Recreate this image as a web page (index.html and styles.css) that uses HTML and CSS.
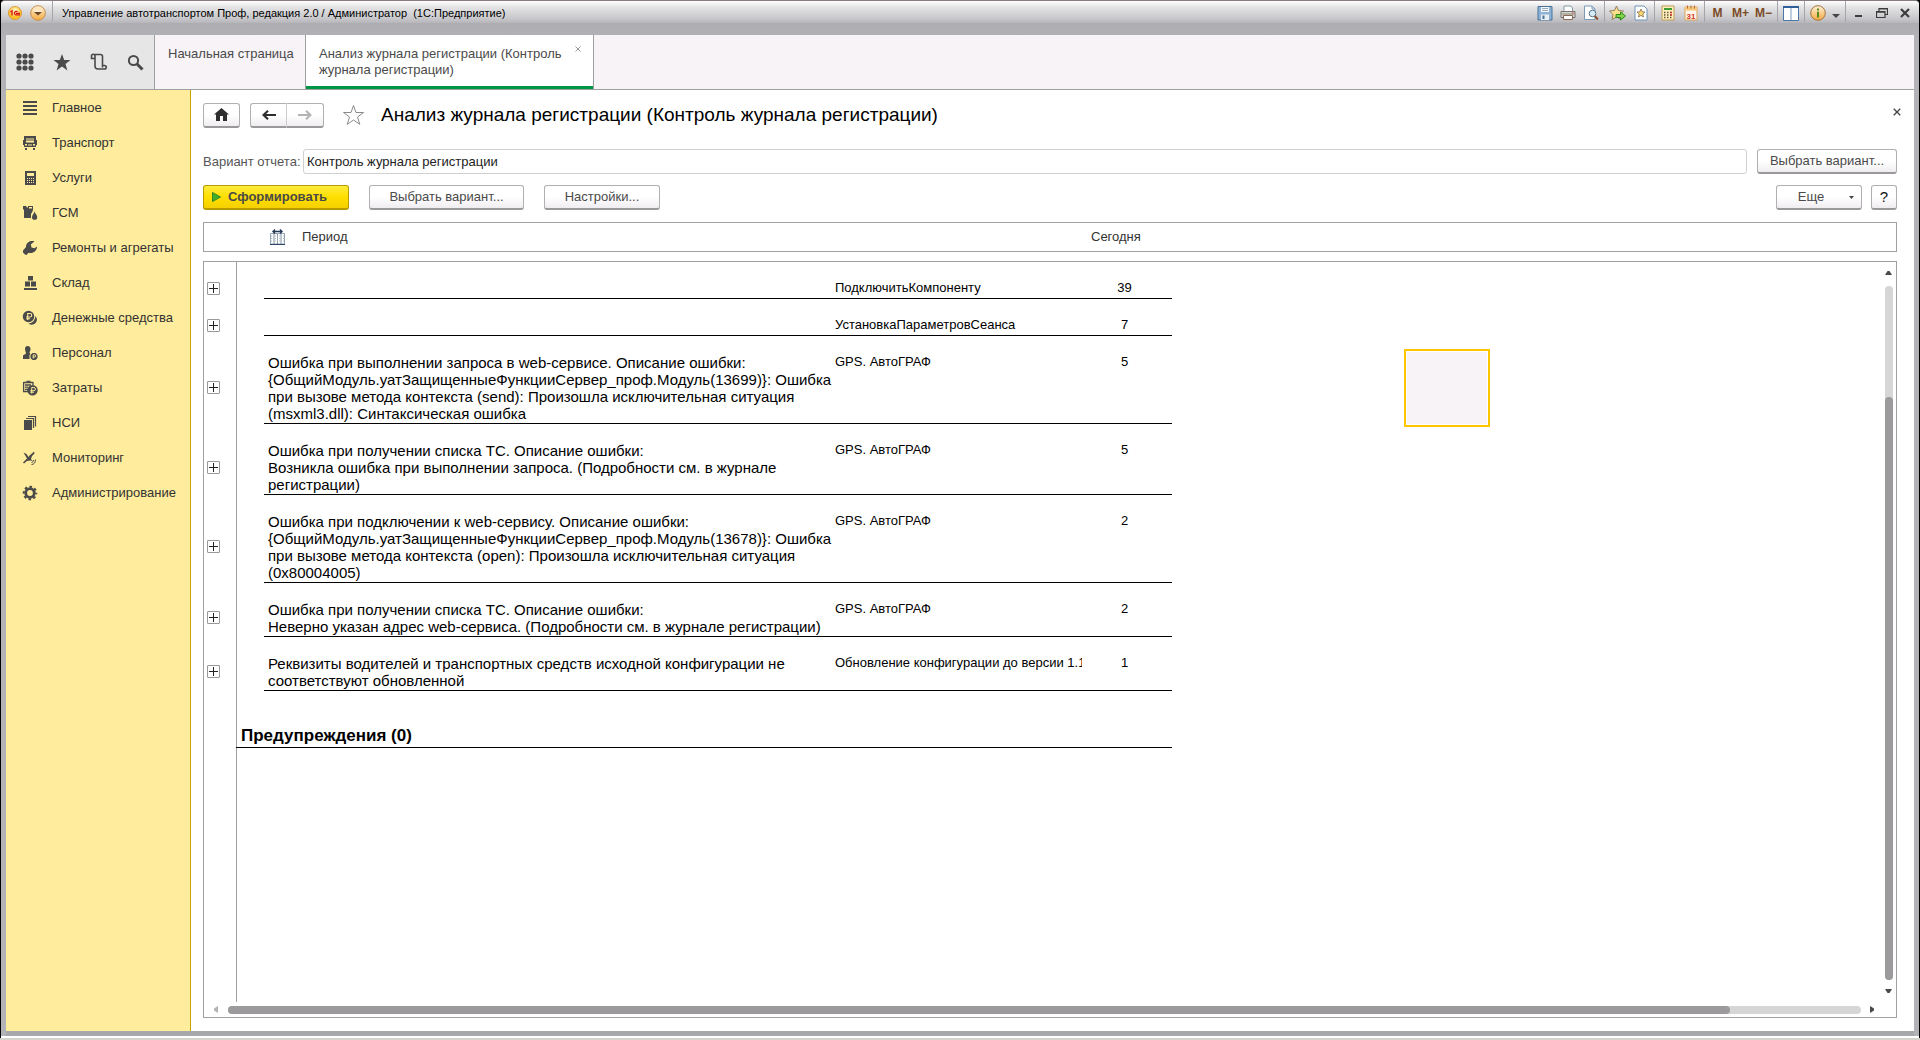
FILE: index.html
```html
<!DOCTYPE html>
<html lang="ru">
<head>
<meta charset="utf-8">
<title>Управление автотранспортом Проф, редакция 2.0 / Администратор (1С:Предприятие)</title>
<link rel="stylesheet" href="styles.css">
</head>
<body>
<div class="window">
  <header class="titlebar">
    <button class="tb-btn" aria-label="1С">
      <svg width="14" height="14" viewBox="0 0 14 14"><defs><radialGradient id="g1" cy=".3"><stop offset="0" stop-color="#fffbd0"/><stop offset="1" stop-color="#fbc12a"/></radialGradient></defs><circle cx="7" cy="7" r="6.5" fill="url(#g1)" stroke="#d98a1c" stroke-width=".8"/><path d="M2.500 6 4 4.800V9.500M9.500 5.800A1.800 1.800 0 1 0 8 8.900H12M8 7.300H12" fill="none" stroke="#d8151b" stroke-width="1.300"/></svg>
    </button>
    <button class="tb-btn" aria-label="Главное меню">
      <svg width="16" height="16" viewBox="0 0 16 16"><defs><linearGradient id="g2" x2="0" y2="1"><stop offset="0" stop-color="#fff3dc"/><stop offset="1" stop-color="#f5a93c"/></linearGradient></defs><circle cx="8" cy="8" r="7.300" fill="url(#g2)" stroke="#c98f4a"/><path d="M4 7H12L8 10.500Z" fill="#6b4526"/><path d="M4 6H12" stroke="#fff"/></svg>
    </button>
    <span class="app-title">Управление автотранспортом Проф, редакция 2.0 / Администратор&nbsp; (1С:Предприятие)</span>
    <div class="tb-group">
      <button class="tb-btn" aria-label="Сохранить"><svg width="16" height="16" viewBox="0 0 16 16"><path d="M1 1.500H15V15H1Z" fill="#8fb3d4" stroke="#4a7299"/><path d="M4 2H12V7H4Z" fill="#f4f8fb"/><path d="M5 3.500H11M5 5.500H11" stroke="#9ab"/><path d="M4 9.500H12V15H4Z" fill="#e9eef2"/><path d="M5.500 10.500H7.500V14H5.500Z" fill="#4a7299"/></svg></button>
      <button class="tb-btn" aria-label="Печать"><svg width="16" height="16" viewBox="0 0 16 16"><path d="M4 1H11L12.500 3V7H4Z" fill="#fff" stroke="#8899a8"/><path d="M1 6.500H15V12.500H1Z" fill="#d8d4ce" stroke="#77716b"/><path d="M2 9H14" stroke="#8a8680"/><path d="M3.500 10.500H12.500V14.500H3.500Z" fill="#fff" stroke="#8a6a52"/><path d="M12 8H13.500" stroke="#d44"/></svg></button>
      <button class="tb-btn" aria-label="Предварительный просмотр"><svg width="16" height="16" viewBox="0 0 16 16"><path d="M1.500 1H9L12 4V14.500H1.500Z" fill="#fff" stroke="#7b9ab8"/><path d="M9 1V4H12" fill="none" stroke="#7b9ab8"/><circle cx="9.500" cy="8.500" r="3.300" fill="#d8ecf6" stroke="#5b7893"/><path d="M11.800 11 14.800 14.500" stroke="#8a5030" stroke-width="2"/></svg></button>
    </div>
    <div class="tb-group">
      <button class="tb-btn" aria-label="Добавить в избранное"><svg width="17" height="16" viewBox="0 0 17 16"><path d="M7.500 1 9.500 5.500 14.500 6 11 9.500 12 14.500 7.500 12 3 14.500 4 9.500.5 6 5.500 5.500Z" fill="#ffe08a" stroke="#8c7f63"/><path d="M7 9.500H11.500V7L16.500 11 11.500 15V12.500H7Z" fill="#7fd44a" stroke="#2c8a18"/></svg></button>
      <button class="tb-btn" aria-label="Избранное"><svg width="14" height="16" viewBox="0 0 14 16"><path d="M1 1H10L13 4V15H1Z" fill="#fff" stroke="#6f93b8"/><path d="M7 4 8.200 6.800 11 7 8.800 9 9.500 12 7 10.400 4.500 12 5.200 9 3 7 5.800 6.800Z" fill="#ffd970" stroke="#7d704f" stroke-width=".8"/></svg></button>
    </div>
    <div class="tb-group">
      <button class="tb-btn" aria-label="Калькулятор"><svg width="14" height="16" viewBox="0 0 14 16"><path d="M1 1H13V15H1Z" fill="#fff2bf" stroke="#c09a55"/><path d="M3 3H11V5H3Z" fill="#3f9c35"/><path d="M3 7.500H11M3 10H11M3 12.500H11" stroke="#6b5535" stroke-width="1.400" stroke-dasharray="1.500 1.500"/><path d="M9.300 7.500H11M9.300 10H11" stroke="#d33" stroke-width="1.400"/></svg></button>
      <button class="tb-btn" aria-label="Календарь"><svg width="14" height="16" viewBox="0 0 14 16"><path d="M1 2H13V15H1Z" fill="#fff8ea" stroke="#d9a35a"/><path d="M1 2H13V5.500H1Z" fill="#f8c77b"/><path d="M3.500.5V3.500M7 .5V3.500M10.500.5V3.500" stroke="#b86a35"/><text x="7" y="13.500" text-anchor="middle" class="cal-day">31</text></svg></button>
    </div>
    <div class="tb-group">
      <button class="tb-btn mem">M</button><button class="tb-btn mem">M+</button><button class="tb-btn mem">M−</button>
    </div>
    <div class="tb-group">
      <button class="tb-btn" aria-label="Панели"><svg width="16" height="15" viewBox="0 0 16 15"><path d="M.5.5H15.500V14.500H.5Z" fill="#fff" stroke="#4c77a8"/><path d="M0 0H16V2H0Z" fill="#30609a"/><path d="M8 2V14" stroke="#7d9cc0"/></svg></button>
    </div>
    <div class="tb-group">
      <button class="tb-btn" aria-label="Справка"><svg width="16" height="16" viewBox="0 0 16 16"><circle cx="8" cy="8" r="7.300" fill="url(#g2)" stroke="#a4763c"/><path d="M8 3.500V5.500M8 6.800V12.500" stroke="#5a8a1e" stroke-width="2"/></svg></button>
      <button class="tb-btn narrow" aria-label="Меню справки"><svg width="8" height="4" viewBox="0 0 8 4"><path d="M0 0H8L4 4Z" fill="#444"/></svg></button>
    </div>
    <div class="tb-group">
      <button class="tb-btn" aria-label="Свернуть"><svg width="12" height="12" viewBox="0 0 12 12"><path d="M2 9H9" stroke="#3c3c3c" stroke-width="2"/></svg></button>
      <button class="tb-btn" aria-label="Восстановить"><svg width="12" height="12" viewBox="0 0 12 12"><path d="M3 4V1.500H11.500V7.500H9.500M3 2H11.500M.5 4.500H9V10.500H.5ZM.5 5.200H9" fill="none" stroke="#3c3c3c" stroke-width="1.200"/></svg></button>
      <button class="tb-btn" aria-label="Закрыть"><svg width="12" height="12" viewBox="0 0 12 12"><path d="M2 2 10 10M10 2 2 10" stroke="#3c3c3c" stroke-width="2.200"/></svg></button>
    </div>
  </header>

  <div class="client">
    <nav class="topbar">
      <div class="tools">
        <button class="tool" aria-label="Меню функций"><svg width="18" height="18" viewBox="0 0 18 18" fill="#4a4a4a"><circle cx="3" cy="3" r="2.600"/><circle cx="9" cy="3" r="2.600"/><circle cx="15" cy="3" r="2.600"/><circle cx="3" cy="9" r="2.600"/><circle cx="9" cy="9" r="2.600"/><circle cx="15" cy="9" r="2.600"/><circle cx="3" cy="15" r="2.600"/><circle cx="9" cy="15" r="2.600"/><circle cx="15" cy="15" r="2.600"/></svg></button>
        <button class="tool" aria-label="Избранное"><svg width="18" height="17" viewBox="0 0 18 17"><path d="M9 0 11.200 6H17.500L12.500 10 14.400 16.500 9 12.500 3.600 16.500 5.500 10 .5 6H6.800Z" fill="#4a4a4a"/></svg></button>
        <button class="tool" aria-label="История"><svg width="18" height="18" viewBox="0 0 18 18" fill="none" stroke="#4a4a4a" stroke-width="1.600"><path d="M5 5.500H1.500V3A1.700 1.700 0 0 1 5 3V13A3 3 0 0 0 8 16H14.500A1.600 1.600 0 0 0 14.500 12.500M3.500 1.500H10.500A2 2 0 0 1 12.500 3.500V14.500M12.500 12.500H15"/></svg></button>
        <button class="tool" aria-label="Поиск"><svg width="17" height="17" viewBox="0 0 17 17" fill="none" stroke="#4a4a4a"><circle cx="6.500" cy="6.500" r="4.600" stroke-width="2"/><path d="M10 10 15.500 15.500" stroke-width="3"/></svg></button>
      </div>
      <a class="tab" href="#home">Начальная страница</a>
      <div class="tab active"><a href="#report">Анализ журнала регистрации (Контроль журнала регистрации)</a><button class="tab-close" aria-label="Закрыть вкладку"><svg width="6" height="6" viewBox="0 0 6 6"><path d="M.5.5 5.500 5.500M5.500.5.5 5.500" stroke="#999"/></svg></button></div>
    </nav>

    <div class="body">
      <nav class="sidebar">
        <a href="#1"><svg viewBox="0 0 16 16"><path d="M1 2H15M1 6H15M1 10H15M1 14H15" stroke="#4a4a4a" stroke-width="2"/></svg>Главное</a>
        <a href="#2"><svg viewBox="0 0 16 16"><path fill-rule="evenodd" d="M2 1H14V5H15V10H14V12H2V10H1V5H2ZM4 3.500V4.500H12V3.500ZM4 5.500V7.500H12V5.500ZM3 9V10.500H5V9ZM11 9V10.500H13V9ZM6 9.500V10.500H10V9.500ZM3 13H5V15H3ZM11 13H13V15H11Z"/></svg>Транспорт</a>
        <a href="#3"><svg viewBox="0 0 16 16"><path fill-rule="evenodd" d="M3 1H14V15H3ZM5 3V6H12V3Z"/><path d="M5 8.500H12.500M5 10.500H12.500M5 12.500H12.500" stroke="#ffec9c" stroke-dasharray="1 1"/></svg>Услуги</a>
        <a href="#4"><svg viewBox="0 0 16 16"><path fill-rule="evenodd" d="M1 1H4L5 2.500H6V1H11V4.500L10.500 6.500 9 9V13H2V5L1 4ZM7 2V3.500H10V2Z"/><path d="M12.500 6.500C13.500 9 15.200 10.200 15.200 12.200A2.600 2.600 0 0 1 10 12.200C10 10.200 11.700 9 12.500 6.500Z"/></svg>ГСМ</a>
        <a href="#5"><svg viewBox="0 0 16 16"><path d="M12.500 1.300C9 .2 4 2 4 7L1 10.500V12.500L3 14.500 4.500 15 6.500 12.800C11 14 15 11 15 6.500L12.500 8.200 9.500 7.500 8.800 4.500Z"/></svg>Ремонты и агрегаты</a>
        <a href="#6"><svg viewBox="0 0 16 16"><path d="M6 1H11V5.500H6ZM3 6.500H8V11.500H3ZM9 6.500H14V11.500H9ZM2 13H15V15H2Z"/></svg>Склад</a>
        <a href="#7"><svg viewBox="0 0 16 16"><circle cx="6.500" cy="6.500" r="5.700"/><path d="M13.200 6C15.500 8 15.500 11 13.500 13 11.500 15.200 8.500 15.200 6.500 13.500 10.500 13.200 13.500 10 13.200 6Z"/><path d="M5.700 10V3.500H8A1.600 1.600 0 0 1 8 7H4.200M4.200 8.700H8" fill="none" stroke="#ffec9c" stroke-width="1.100"/></svg>Денежные средства</a>
        <a href="#8"><svg viewBox="0 0 16 16"><path d="M5.500 1C8 1 8.500 2.500 8.500 4 8.500 6 7.500 6.500 7.500 8L8.500 9 7.500 10V14H1V10.500L4 8.500C4 7 3 6 3 4 3 2.500 3.500 1 5.500 1Z"/><path d="M10.500 8H13.500L15.500 10V13L13.500 15H10.500L8.500 13V10Z"/><path d="M11.200 13.500V9.800H12.600A1 1 0 0 1 12.600 12H11" stroke="#ffec9c" fill="none"/></svg>Персонал</a>
        <a href="#9"><svg viewBox="0 0 16 16"><path d="M1.600 2.500H11M1.600 2V11.500H6M3 5H9M3 7.200H6M3 9.300H6M11 2V5M4.500 1.500H8.500" fill="none" stroke="#4a4a4a" stroke-width="1.300"/><circle cx="10.500" cy="10.200" r="5.200"/><path d="M9.700 13.500V7.500H11.800A1.500 1.500 0 0 1 11.800 10.700H8.300M8.300 12.200H12" fill="none" stroke="#ffec9c"/></svg>Затраты</a>
        <a href="#10"><svg viewBox="0 0 16 16"><path d="M2 5H10V15H2Z"/><path d="M4 3.500H11.500V13M6 1.500H13.500V11.500" fill="none" stroke="#4a4a4a" stroke-width="1.200"/></svg>НСИ</a>
        <a href="#11"><svg viewBox="0 0 16 16"><path d="M1.500 2.500 4.500 4 6.500 7 7.500 5.500 10.500 3 12 1.500 12.500 3.500 10 6 9 9 10.500 11 8.500 10.500 5 11 2 13.500 1 12.500 5 8.500Z"/><path d="M9.500 12.500C10.500 12.500 11.500 11.500 11.500 10M9.500 14.500C12 14.500 13.500 12.500 13.500 9.500" fill="none" stroke="#4a4a4a"/></svg>Мониторинг</a>
        <a href="#12"><svg viewBox="0 0 16 16"><circle cx="8" cy="8" r="4.300" fill="none" stroke="#4a4a4a" stroke-width="2.800"/><circle cx="8" cy="8" r="6.300" fill="none" stroke="#4a4a4a" stroke-width="2" stroke-dasharray="2.600 2.350" stroke-dashoffset="1.300"/></svg>Администрирование</a>
      </nav>

      <main class="main">
        <div class="heading">
          <button class="btn home" aria-label="Домой"><svg width="15" height="13" viewBox="0 0 15 13"><path d="M7.500 0 15 6.500H13V13H9V8H6V13H2V6.500H0Z" fill="#2e2e2e"/></svg></button>
          <div class="nav-pair">
            <button class="btn" aria-label="Назад"><svg width="14" height="10" viewBox="0 0 14 10"><path d="M14 5H3M6 .8 1.500 5 6 9.200" fill="none" stroke="#2e2e2e" stroke-width="2.200"/></svg></button><button class="btn" aria-label="Вперед"><svg width="14" height="10" viewBox="0 0 14 10"><path d="M0 5H11M8 .8 12.500 5 8 9.200" fill="none" stroke="#b4b4b4" stroke-width="2"/></svg></button>
          </div>
          <button class="plain" aria-label="В избранное"><svg width="23" height="22" viewBox="0 0 23 22"><path d="M11.500 1.500 14 8.500H21.500L15.500 13 17.800 20.300 11.500 16 5.200 20.300 7.500 13 1.500 8.500H9Z" fill="#fff" stroke="#8a8a8a"/></svg></button>
          <h1>Анализ журнала регистрации (Контроль журнала регистрации)</h1>
          <button class="plain close" aria-label="Закрыть"><svg width="8" height="8" viewBox="0 0 8 8"><path d="M.7.7 7.300 7.300M7.300.7.700 7.300" stroke="#444" stroke-width="1.300"/></svg></button>
        </div>

        <div class="variant">
          <label for="variant">Вариант отчета:</label>
          <input id="variant" type="text" value="Контроль журнала регистрации">
          <button class="btn pick">Выбрать вариант...</button>
        </div>

        <div class="commands">
          <button class="btn primary"><svg width="9" height="10" viewBox="0 0 9 10"><path d="M.5.5 8.500 5 .5 9.500Z" fill="#3fae2a" stroke="#2f8a20"/></svg>Сформировать</button>
          <button class="btn choose">Выбрать вариант...</button>
          <button class="btn settings">Настройки...</button>
          <button class="btn more">Еще<svg width="5" height="3" viewBox="0 0 5 3"><path d="M0 0H5L2.500 3Z" fill="#444"/></svg></button>
          <button class="btn help">?</button>
        </div>

        <div class="period">
          <svg width="15" height="16" viewBox="0 0 15 16"><path d="M.5 4.500H14.500V15H.5Z" fill="#fff" stroke="#93a5b5"/><path d="M4 5V15M7.500 5V15M11 5V15" stroke="#8295a8"/><path d="M1 7H14M1 9.500H14M1 12H14" stroke="#b4c0cc" stroke-dasharray="1 1"/><path d="M0 15.500H15" stroke="#2c4468"/><path d="M3 2.500H12M5 .5 3 2.500 5 4.500M10 .5 12 2.500 10 4.500" fill="none" stroke="#243a52" stroke-width="1.400"/></svg>
          <span class="period-name">Период</span>
          <span>Сегодня</span>
        </div>

        <section class="sheet">
          <div class="view">
            <table>
              <colgroup><col class="c-tree"><col class="c-gap"><col class="c-text"><col class="c-event"><col class="c-count"></colgroup>
              <tbody>
                <tr><td class="tree"><button class="plus" aria-label="Развернуть"></button></td><td></td><td class="text"></td><td class="event">ПодключитьКомпоненту</td><td class="count">39</td></tr>
                <tr><td class="tree"><button class="plus" aria-label="Развернуть"></button></td><td></td><td class="text"></td><td class="event">УстановкаПараметровСеанса</td><td class="count">7</td></tr>
                <tr><td class="tree"><button class="plus" aria-label="Развернуть"></button></td><td></td><td class="text">Ошибка при выполнении запроса в web-сервисе. Описание ошибки:<br>{ОбщийМодуль.уатЗащищенныеФункцииСервер_проф.Модуль(13699)}: Ошибка<br>при вызове метода контекста (send): Произошла исключительная ситуация<br>(msxml3.dll): Синтаксическая ошибка</td><td class="event">GPS. АвтоГРАФ</td><td class="count">5</td></tr>
                <tr><td class="tree"><button class="plus" aria-label="Развернуть"></button></td><td></td><td class="text">Ошибка при получении списка ТС. Описание ошибки:<br>Возникла ошибка при выполнении запроса. (Подробности см. в журнале<br>регистрации)</td><td class="event">GPS. АвтоГРАФ</td><td class="count">5</td></tr>
                <tr><td class="tree"><button class="plus" aria-label="Развернуть"></button></td><td></td><td class="text">Ошибка при подключении к web-сервису. Описание ошибки:<br>{ОбщийМодуль.уатЗащищенныеФункцииСервер_проф.Модуль(13678)}: Ошибка<br>при вызове метода контекста (open): Произошла исключительная ситуация<br>(0x80004005)</td><td class="event">GPS. АвтоГРАФ</td><td class="count">2</td></tr>
                <tr><td class="tree"><button class="plus" aria-label="Развернуть"></button></td><td></td><td class="text">Ошибка при получении списка ТС. Описание ошибки:<br>Неверно указан адрес web-сервиса. (Подробности см. в журнале регистрации)</td><td class="event">GPS. АвтоГРАФ</td><td class="count">2</td></tr>
                <tr><td class="tree"><button class="plus" aria-label="Развернуть"></button></td><td></td><td class="text">Реквизиты водителей и транспортных средств исходной конфигурации не<br>соответствуют обновленной</td><td class="event">Обновление конфигурации до версии 1.1</td><td class="count">1</td></tr>
                <tr><td></td><td class="warnings" colspan="4">Предупреждения (0)</td></tr>
              </tbody>
            </table>
            <div class="cell-cursor"></div>
          </div>
          <div class="vscroll">
            <svg width="7" height="5" viewBox="0 0 7 5"><path d="M0 5H7L4.500 1H2.500Z" fill="#4a4a4a"/></svg>
            <div class="track"><div class="thumb"></div></div>
            <svg width="7" height="5" viewBox="0 0 7 5"><path d="M0 0H7L4.500 4H2.500Z" fill="#4a4a4a"/></svg>
          </div>
          <div class="hscroll">
            <svg width="5" height="7" viewBox="0 0 5 7"><path d="M5 0V7L1 4.500V2.500Z" fill="#b4b4b4"/></svg>
            <div class="track"><div class="thumb"></div></div>
            <svg width="5" height="7" viewBox="0 0 5 7"><path d="M0 0V7L4 4.500V2.500Z" fill="#4a4a4a"/></svg>
          </div>
        </section>
      </main>
    </div>
  </div>
</div>
</body>
</html>
```
FILE: styles.css
```css
* { box-sizing: border-box; }

body {
  margin: 0;
  height: 100vh;
  display: flex;
  flex-direction: column;
  background: #000;
  border-bottom: 2px solid #d6d2cd;
  font: 13px/16px "Liberation Sans", Arial, sans-serif;
  color: #333;
}

a { color: inherit; text-decoration: none; }
svg { display: block; flex: none; }
button { font: inherit; color: inherit; margin: 0; padding: 0; border: 0; background: none; }

.window {
  flex: 1;
  min-height: 0;
  margin: 0 1px 2px;
  display: flex;
  flex-direction: column;
  border-top: 1px solid #857c82;
  border-radius: 4px 4px 0 0;
  background: #b3b3b7;
  box-shadow: 0 2px 0 #fff;
}
.body, .client { min-height: 0; }

/* window title bar */
.titlebar {
  height: 34px;
  flex: none;
  display: flex;
  align-items: flex-start;
  padding: 0 1px 0 2px;
  border-radius: 4px 4px 0 0;
  background: linear-gradient(#fff, #e4e4e6 6px, #c6c6ca 18px, #b6b6ba 22px, #aeaeb2 22px, #b1b1b5);
}
.tb-btn {
  width: 23px;
  height: 24px;
  display: flex;
  align-items: center;
  justify-content: center;
}
.tb-btn.narrow { width: 14px; padding-top: 6px; }
.app-title {
  flex: 1;
  height: 20px;
  line-height: 24px;
  margin-left: 3px;
  padding-left: 9px;
  border-left: 1px solid #a5a5a9;
  font-size: 11px;
  color: #000;
  white-space: nowrap;
}
.tb-group {
  display: flex;
  height: 21px;
  padding: 0 2px 0 1px;
  border-left: 1px solid #a5a5a9;
}
.tb-group:nth-of-type(1) { border-color: transparent; }
.mem { color: #7b4a26; font-size: 12px; font-weight: bold; }
.cal-day { font: bold 8px "Liberation Sans", Arial, sans-serif; fill: #d8341c; }

/* client area */
.client {
  flex: 1;
  display: flex;
  flex-direction: column;
  margin: 0 5px;
  border-bottom: 5px solid #a6a8ac;
  background: #fff;
}

.topbar {
  height: 55px;
  flex: none;
  display: flex;
  background: #f7f3f7;
  border-bottom: 1px solid #a0a0a0;
}
.tools {
  width: 149px;
  display: flex;
  align-items: center;
  background: #e6e6e6;
  border-right: 1px solid #a0a0a0;
}
.tool { flex: 1; display: flex; justify-content: center; }
.tab {
  width: 151px;
  padding: 11px 0 0 13px;
  color: #4a4a4a;
  white-space: nowrap;
  border-right: 1px solid #a0a0a0;
}
.tab.active {
  width: 288px;
  display: flex;
  justify-content: space-between;
  align-items: flex-start;
  background: #fff;
  white-space: normal;
  box-shadow: inset 0 -3px 0 #009646;
}
.tab.active a { width: 252px; }
.tab-close { padding-right: 12px; }

.body { flex: 1; display: flex; }

.sidebar {
  width: 185px;
  flex: none;
  background: #ffec9c;
  border-right: 1px solid #c4a500;
}
.sidebar a {
  height: 35px;
  display: flex;
  align-items: center;
  gap: 14px;
  padding-left: 16px;
  white-space: nowrap;
}
.sidebar svg { width: 16px; height: 16px; fill: #4a4a4a; }

.main {
  flex: 1;
  min-width: 0;
  display: flex;
  flex-direction: column;
  padding: 12px 17px 13px 12px;
}

/* buttons */
.btn {
  height: 25px;
  display: flex;
  align-items: center;
  justify-content: center;
  background: linear-gradient(#fff 50%, #f0edf0);
  border: 1px solid #b0b0b0;
  border-bottom: 2px solid #999;
  border-radius: 3px;
  color: #4a4a4a;
  white-space: nowrap;
}
.plain { display: flex; }

.heading { display: flex; align-items: center; height: 26px; }
.home { width: 37px; }
.nav-pair { display: flex; margin: 0 18px 0 10px; }
.nav-pair .btn { width: 37px; }
.nav-pair .btn:first-child { border-radius: 3px 0 0 3px; border-right-color: #ccc; }
.nav-pair .btn:last-child { border-radius: 0 3px 3px 0; border-left: 0; }
h1 { flex: 1; margin: 0 0 0 16px; font-size: 19px; line-height: 24px; font-weight: normal; color: #000; }
.close { margin: 0 -4px 6px 0; }

.variant { display: flex; align-items: center; margin-top: 21px; }
.variant label { width: 100px; color: #555; white-space: nowrap; }
.variant input {
  flex: 1;
  min-width: 0;
  height: 25px;
  padding: 0 3px;
  border: 1px solid #d0d0d0;
  border-radius: 3px;
  font: inherit;
  color: #222;
}
.pick { width: 140px; margin-left: 10px; }

.commands { display: flex; margin-top: 11px; }
.primary {
  width: 146px;
  gap: 7px;
  justify-content: flex-start;
  padding-left: 8px;
  background: linear-gradient(#ffec3e, #ffdf00 50%, #f5d000);
  border-color: #b89b00;
  font-weight: bold;
}
.choose { width: 155px; margin-left: 20px; }
.settings { width: 116px; margin-left: 20px; }
.more { width: 86px; margin-left: auto; gap: 25px; padding-left: 14px; }
.help { width: 26px; margin-left: 9px; color: #111; font-size: 15px; }

.period {
  height: 30px;
  margin-top: 12px;
  display: flex;
  align-items: center;
  padding-left: 66px;
  border: 1px solid #a0a0a0;
}
.period-name { width: 806px; padding-left: 17px; }

/* report sheet */
.sheet {
  flex: 1;
  min-height: 0;
  margin-top: 9px;
  display: grid;
  grid-template: minmax(0, 1fr) 15px / minmax(0, 1fr) 15px;
  border: 1px solid #a0a0a0;
}
.view {
  position: relative;
  overflow: hidden;
  background: linear-gradient(#a0a0a0, #a0a0a0) 32px 0 / 1px 100% no-repeat;
}
table {
  width: 968px;
  table-layout: fixed;
  border-collapse: separate;
  border-spacing: 0;
  color: #000;
}
.c-tree { width: 32px; }
.c-gap { width: 28px; }
.c-text { width: 567px; }
.c-event { width: 251px; }
.c-count { width: 90px; }
td { height: 37px; padding: 18px 0 1px; vertical-align: top; white-space: nowrap; }
.tree { padding: 17px 0 2px 3px; vertical-align: middle; }
.text, .event, .count { border-bottom: 1px solid #000; }
.text { padding-left: 4px; font-size: 15px; line-height: 17px; }
.event, .count { font-size: 13px; line-height: 15px; }
.event { padding-left: 4px; overflow: hidden; }
.count { padding-right: 5px; text-align: center; }
.warnings {
  height: 57px;
  padding: 0 0 1px 5px;
  border-bottom: 1px solid #000;
  vertical-align: bottom;
  font-size: 17px;
  line-height: 20px;
  font-weight: bold;
}
.plus {
  display: block;
  width: 13px;
  height: 13px;
  border: 1px solid #999;
  border-radius: 1px;
  background:
    linear-gradient(#222, #222) center / 9px 1px no-repeat,
    linear-gradient(#222, #222) center / 1px 9px no-repeat;
}
.cell-cursor {
  position: absolute;
  left: 1200px;
  top: 87px;
  width: 86px;
  height: 78px;
  border: 2px solid #ffc600;
  background: #f7f3f7;
  box-shadow: inset 0 0 0 1px #fff;
}

.vscroll {
  display: flex;
  flex-direction: column;
  align-items: center;
  justify-content: space-between;
  padding: 8px 0;
}
.hscroll {
  display: flex;
  align-items: center;
  justify-content: space-between;
  padding: 0 6px 0 9px;
}
.track { display: flex; background: #d6d6d6; border-radius: 4px; }
.thumb { background: #9c9a9c; border-radius: 4px; }
.vscroll .track { flex: 1; width: 8px; margin: 11px 0 9px; align-items: flex-end; }
.vscroll .thumb { width: 8px; height: 84%; }
.hscroll .track { flex: 1; height: 8px; margin: 0 9px 0 10px; }
.hscroll .thumb { width: 92%; }
```
